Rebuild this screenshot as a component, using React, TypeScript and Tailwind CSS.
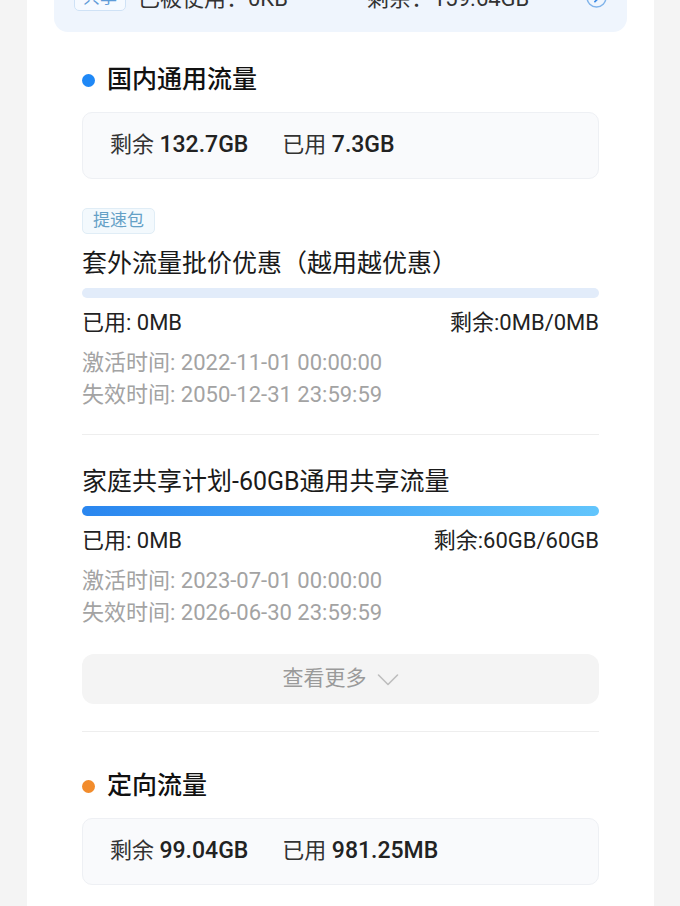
const font = { fontFamily: "Roboto, 'Noto Sans CJK SC', sans-serif" };

function SectionHeading({ dot, title, className }: { dot: string; title: string; className: string }) {
  return (
    <div className={`flex h-[28px] items-center gap-[12px] ${className}`}>
      <span className={`h-[13px] w-[13px] rounded-full ${dot}`} />
      <h2 className="text-[25px] font-medium leading-[28px] text-[#111]">{title}</h2>
    </div>
  );
}

function SummaryBox({ left, used, className }: { left: string; used: string; className: string }) {
  return (
    <div className={`flex h-[67px] items-center gap-[34px] rounded-[10px] border border-[#eef0f4] bg-[#f9fafc] px-[27px] text-[22px] text-[#222] ${className}`}>
      <p>
        <span className="text-[#333]">剩余 </span>
        <span className="text-[23px] font-medium">{left}</span>
      </p>
      <p>
        <span className="text-[#333]">已用 </span>
        <span className="text-[23px] font-medium">{used}</span>
      </p>
    </div>
  );
}

function PackageItem({
  title,
  bar,
  used,
  left,
  start,
  end,
}: {
  title: string;
  bar: string;
  used: string;
  left: string;
  start: string;
  end: string;
}) {
  return (
    <div>
      <h3 className="text-[25px] leading-[30px] text-[#1a1a1a]">{title}</h3>
      <div className={`mt-[9px] h-[10px] rounded-full ${bar}`} />
      <div className="mt-[11px] flex h-[26px] items-center justify-between text-[22px] text-[#222]">
        <span>已用: {used}</span>
        <span>剩余:{left}</span>
      </div>
      <div className="mt-[12px] text-[22px] leading-[32px] text-[#a3a3a3]">
        <p>激活时间: {start}</p>
        <p>失效时间: {end}</p>
      </div>
    </div>
  );
}

export default function App() {
  return (
    <div className="min-h-[906px] bg-[#f4f4f4] pl-[27px] pr-[26px]" style={font}>
      <div className="min-h-[906px] overflow-hidden bg-white">
        {/* shared plan card, scrolled mostly out of view */}
        <div className="mx-[27px] h-[32px] overflow-hidden rounded-b-[14px] bg-[#eff5fd]">
          <div className="-mt-[20px] flex h-[36px] items-center pl-[20px] pr-[20px] text-[22px] text-[#333]">
            <span className="flex h-[26px] items-center rounded-[5px] border border-[#cfe2f6] bg-[#f6faff] px-[8px] text-[17px] text-[#5f9cd8]">
              共享
            </span>
            <span className="ml-[12px] w-[229px]">已被使用：0KB</span>
            <span className="flex-1">剩余：159.64GB</span>
            <svg width="21" height="21" viewBox="0 0 20 20" fill="none" className="-mt-[2px]">
              <circle cx="10" cy="10" r="9" stroke="#7fb3ea" strokeWidth="1.4" />
              <path d="M8.5 6l4 4-4 4" stroke="#3b8be6" strokeWidth="1.6" strokeLinecap="round" strokeLinejoin="round" />
            </svg>
          </div>
        </div>

        <div className="px-[55px]">
          <SectionHeading dot="bg-[#1f88f6]" title="国内通用流量" className="mt-[34px]" />
          <SummaryBox left="132.7GB" used="7.3GB" className="mt-[18px]" />

          <span className="mt-[29px] inline-flex h-[26px] items-center rounded-[5px] border border-[#e0edf6] bg-[#f3f9fd] px-[10px] text-[17px] text-[#64a0c6]">
            提速包
          </span>
          <div className="mt-[15px]">
            <PackageItem
              title="套外流量批价优惠（越用越优惠）"
              bar="bg-[#e2ecfa]"
              used="0MB"
              left="0MB/0MB"
              start="2022-11-01 00:00:00"
              end="2050-12-31 23:59:59"
            />
          </div>

          <div className="mt-[23px] h-px bg-[#eeeeee]" />

          <div className="mt-[32px]">
            <PackageItem
              title="家庭共享计划-60GB通用共享流量"
              bar="bg-gradient-to-r from-[#2a86ef] to-[#62c5fc]"
              used="0MB"
              left="60GB/60GB"
              start="2023-07-01 00:00:00"
              end="2026-06-30 23:59:59"
            />
          </div>

          <button className="mt-[25px] flex h-[50px] w-full items-center justify-center gap-[10px] rounded-[12px] bg-[#f4f4f4] text-[21px] text-[#9a9a9a]">
            查看更多
            <svg width="22" height="14" viewBox="0 0 22 14" fill="none" className="mt-[2px]">
              <path d="M1.5 2l9.5 9.5L20.5 2" stroke="#bdbdbd" strokeWidth="1.6" strokeLinecap="round" strokeLinejoin="round" />
            </svg>
          </button>

          <div className="mt-[27px] h-px bg-[#eeeeee]" />

          <SectionHeading dot="bg-[#f28c2c]" title="定向流量" className="mt-[40px]" />
          <SummaryBox left="99.04GB" used="981.25MB" className="mt-[18px]" />
        </div>
      </div>
    </div>
  );
}
